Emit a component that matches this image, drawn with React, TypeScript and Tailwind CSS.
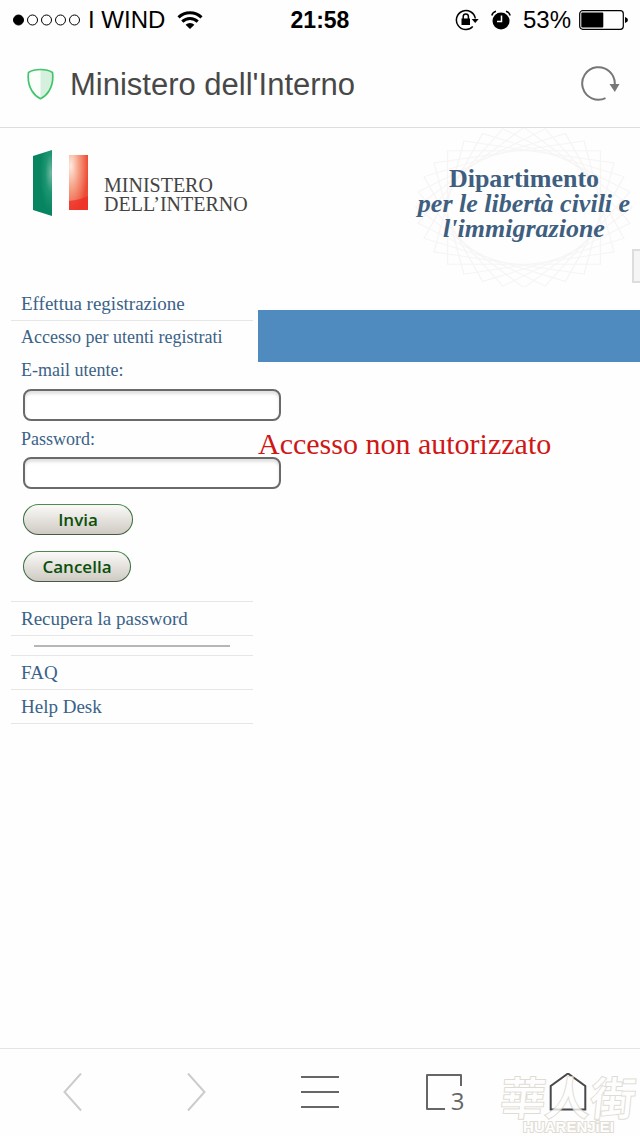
import React from "react";

const sans = "font-['Liberation_Sans',Arial,sans-serif]";
const menuLink = "block border-b border-[#e6e6e6] px-[10px] text-[19px] leading-[33px]";

function StatusBar() {
  return (
    <div className="grid h-10 grid-cols-[1fr_auto_1fr] items-center px-3 text-[24px] text-black">
      <div className="flex items-center gap-2">
        <svg className="h-[14px] w-[68px]" viewBox="0 0 68 14" fill="none" stroke="#000">
          <circle cx="6.500" cy="7" r="5" fill="#000" />
          <circle cx="20.500" cy="7" r="5" />
          <circle cx="34.500" cy="7" r="5" />
          <circle cx="48.500" cy="7" r="5" />
          <circle cx="62.500" cy="7" r="5" />
        </svg>
        <span>I WIND</span>
        <svg className="ml-1 h-[18px] w-[26px]" viewBox="0 0 26 18" fill="none" stroke="#000" strokeWidth="3">
          <path d="M1.500 6.300a16.500 16.500 0 0 1 23 0" />
          <path d="M5.300 10.600a11 11 0 0 1 15.400 0" />
          <path d="M8.600 13.800a6.300 6.300 0 0 1 8.800 0L13 18z" fill="#000" stroke="none" />
        </svg>
      </div>
      <span className="text-[23px] font-bold">21:58</span>
      <div className="flex items-center justify-end">
        <svg className="mr-3 h-6 w-6" viewBox="0 0 24 24" fill="none" stroke="#000">
          <path d="M17.800 18.600A9.500 9.500 0 1 1 20.300 10.500" strokeWidth="1.500" />
          <path d="M16.700 11h7L20.200 15z" fill="#000" stroke="none" />
          <rect x="6.500" y="10.500" width="8.500" height="6.500" fill="#000" stroke="none" />
          <path d="M8.200 11V8.500a2.600 2.600 0 0 1 5.200 0V11" strokeWidth="1.500" />
        </svg>
        <svg className="mr-3 h-5 w-5" viewBox="0 0 20 20" fill="none">
          <circle cx="10" cy="11" r="8.500" fill="#000" />
          <path d="M10.500 5.500v6H6" stroke="#fff" strokeWidth="1.500" />
          <path d="M.8 5.500A6 6 0 0 1 5 1.200M15 1.200a6 6 0 0 1 4.200 4.300" stroke="#000" strokeWidth="1.500" />
        </svg>
        <span className="mr-2">53%</span>
        <svg className="h-[20px] w-[49px]" viewBox="0 0 49 20">
          <rect x=".7" y=".7" width="43.600" height="18.600" rx="3" fill="none" stroke="#000" strokeWidth="1.200" />
          <rect x="2.300" y="2.500" width="22" height="15" rx="1" fill="#000" />
          <path d="M46 7q3 1 3 3t-3 3z" fill="#000" />
        </svg>
      </div>
    </div>
  );
}

function AddressBar() {
  return (
    <header className="flex h-[88px] items-center border-b border-[#dedede] pr-5 pl-[27px]">
      <svg className="mr-4 h-8 w-[27px]" viewBox="0 0 27 32">
        <path d="M13.500 1.500C9 1.500 4.500 2.500 1.500 4.500 .5 12 2 18 5 23c2 3.300 5 6 8.500 7.700z" fill="#fafffb" />
        <path d="M13.500 1.500c4.500 0 9 1 12 3C26.500 12 25 18 22 23c-2 3.300-5 6-8.500 7.700z" fill="#d5f0dd" />
        <path d="M13.500 1.500C9 1.500 4.500 2.500 1.500 4.500 .5 12 2 18 5 23c2 3.300 5 6 8.500 7.700 3.500-1.700 6.500-4.400 8.500-7.700 3-5 4.500-11 3.500-18.500-3-2-7.500-3-12-3z" fill="none" stroke="#40c56a" strokeWidth="1.700" strokeLinejoin="round" />
      </svg>
      <h1 className="flex-1 pt-[2px] text-[31px] leading-9 text-[#484848]">Ministero dell'Interno</h1>
      <button type="button" aria-label="Ricarica">
        <svg className="h-9 w-10" viewBox="0 0 40 36" fill="none">
          <path d="M25.500 32.200A16.300 16.300 0 1 1 34.800 18" stroke="#777" strokeWidth="2" />
          <path d="M29.500 18h10L34.800 26z" fill="#777" />
        </svg>
      </button>
    </header>
  );
}

function Rosette() {
  return (
    <svg className="absolute inset-0 h-full w-full" viewBox="-116 -80 232 160" fill="none" stroke="#f7f4f4">
      {Array.from({ length: 8 }, (_, i) => (
        <path key={i} d="M-57-57H57V57H-57z" transform={"scale(1.35 1) rotate(" + i * 11.25 + ")"} />
      ))}
    </svg>
  );
}

function Banner() {
  return (
    <div className="flex items-start justify-between pl-8">
      <div className="flex items-end pt-[21px]">
        <svg className="h-[68px] w-[57px]" viewBox="0 0 57 68">
          <defs>
            <radialGradient id="green" cx=".95" cy=".35" r=".6">
              <stop offset="0" stopColor="#6fb9a0" />
              <stop offset=".5" stopColor="#1d9572" />
              <stop offset="1" stopColor="#078460" />
            </radialGradient>
            <radialGradient id="red" cx=".1" cy=".2" r=".9">
              <stop offset="0" stopColor="#ffe9df" />
              <stop offset=".45" stopColor="#f5a286" />
              <stop offset="1" stopColor="#ed4b36" />
            </radialGradient>
          </defs>
          <path d="M1 7 20 1v66L1 61z" fill="url(#green)" />
          <path d="M37 6h19v55H37z" fill="url(#red)" />
          <path d="M37 52q11-1 19-5v14H37z" fill="#ee2b24" opacity=".7" />
        </svg>
        <div className="pb-[3px] pl-[15px] font-['Liberation_Serif','Times_New_Roman',serif] text-[20px] leading-[19px] text-[#444]">
          <div>MINISTERO</div>
          <div>DELL’INTERNO</div>
        </div>
      </div>
      <div className="relative flex h-[159px] w-[232px] flex-col pt-[38px] text-center text-[26px] leading-[25px] font-bold text-[#3e5f80]">
        <Rosette />
        <div className="relative">
          Dipartimento
          <div className="italic">
            per le libertà civili e
            <br />
            l'immigrazione
          </div>
        </div>
      </div>
    </div>
  );
}

function LoginForm() {
  const field =
    "mx-3 block h-8 w-[258px] rounded-[8px] border-2 border-[#6a6a6a] bg-white px-2 shadow-[inset_0_3px_3px_#e2e2e2]";
  const button =
    "ml-3 block h-[31px] rounded-full border border-t-[#4d8a4d] border-x-[#376b37] border-b-[#455b45] bg-linear-to-b from-[#fbfaf9] to-[#cfcac3] font-['Open_Sans',sans-serif] text-[17px] leading-[28px] font-semibold text-[#0a500a]";
  return (
    <form className="border-b border-[#e6e6e6] pb-[19px] text-[18px]" onSubmit={(e) => e.preventDefault()}>
      <p className="px-[10px] leading-[33px]">Accesso per utenti registrati</p>
      <label htmlFor="email" className="block px-[10px] pb-[3px] leading-[32px]">
        E-mail utente:
      </label>
      <input id="email" type="text" className={field} />
      <label htmlFor="password" className="block px-[10px] leading-[36px]">
        Password:
      </label>
      <input id="password" type="password" className={field} />
      <div className="flex flex-col items-start gap-4 pt-[15px]">
        <button type="submit" className={button + " w-[110px]"}>
          Invia
        </button>
        <button type="reset" className={button + " w-[108px]"}>
          Cancella
        </button>
      </div>
    </form>
  );
}

function Watermark() {
  return (
    <div
      aria-hidden="true"
      className="pointer-events-none absolute right-1 bottom-0 flex flex-col items-center text-[#fefefe] opacity-80 [paint-order:stroke]"
    >
      <span className="-skew-x-6 font-['Noto_Sans_CJK_TC',sans-serif] text-[45px] leading-[46px] font-medium [-webkit-text-stroke:2px_#d9d4ca]">
        華人街
      </span>
      <span className="pb-[2px] font-['Liberation_Sans',sans-serif] text-[15px] leading-[15px] font-bold [-webkit-text-stroke:2px_#d9d4ca]">
        HUARENJiEI
      </span>
    </div>
  );
}

function Toolbar() {
  const cell = "flex items-center justify-center";
  return (
    <nav className="relative grid h-[88px] grid-cols-5 border-t border-[#e4e4e4] px-[11px]">
      <button type="button" aria-label="Indietro" className={cell}>
        <svg className="h-10 w-5" viewBox="0 0 20 40" fill="none" stroke="#ccc" strokeWidth="2">
          <path d="M18 .5 1.500 19 18 37.500" />
        </svg>
      </button>
      <button type="button" aria-label="Avanti" className={cell}>
        <svg className="h-10 w-5" viewBox="0 0 20 40" fill="none" stroke="#ccc" strokeWidth="2">
          <path d="M2 .5 18.500 19 2 37.500" />
        </svg>
      </button>
      <button type="button" aria-label="Menu" className={cell}>
        <svg className="h-10 w-10" viewBox="0 0 40 40" stroke="#666" strokeWidth="2">
          <path d="M1 4h38M1 19h38M1 34h38" />
        </svg>
      </button>
      <button type="button" aria-label="Schede aperte" className={cell}>
        <span className="relative">
          <svg className="h-10 w-10" viewBox="0 0 40 40" fill="none" stroke="#666" strokeWidth="2">
            <path d="M21 36H3V2h34v11" strokeLinejoin="round" />
          </svg>
          <span className="absolute right-[-1px] bottom-[-4px] font-['Open_Sans',sans-serif] text-[24px] leading-8 text-[#666]">
            3
          </span>
        </span>
      </button>
      <button type="button" aria-label="Pagina iniziale" className={cell}>
        <svg className="h-10 w-10" viewBox="0 0 40 40" fill="none" stroke="#48484c" strokeWidth="2">
          <path d="M21 .5 38.300 13v23.500H3.700V13z" />
        </svg>
      </button>
      <Watermark />
    </nav>
  );
}

export default function App() {
  return (
    <div className={"flex min-h-screen flex-col overflow-x-hidden bg-[#fefefe] " + sans}>
      <StatusBar />
      <AddressBar />
      <main className="flex-1 font-['Liberation_Serif','Times_New_Roman',serif] text-[#3a6288]">
        <div className="relative">
          <Banner />
          <div className="absolute right-0 bottom-1 h-[34px] w-2 border-2 border-r-0 border-[#ddd] bg-[#f5f5f5]" />
        </div>
        <div className="flex items-start">
          <aside className="box-content w-[242px] shrink-0 pl-[11px]">
            <a href="#registrazione" className={menuLink}>
              Effettua registrazione
            </a>
            <LoginForm />
            <a href="#recupera" className={menuLink}>
              Recupera la password
            </a>
            <div className="border-b border-[#e6e6e6] px-[23px] pt-[9px] pb-2">
              <hr className="border-t-2 border-[#b5b8b8]" />
            </div>
            <a href="#faq" className={menuLink}>
              FAQ
            </a>
            <a href="#help" className={menuLink}>
              Help Desk
            </a>
          </aside>
          <section className="ml-[5px] min-w-0 flex-1 pt-[23px]">
            <div className="h-[52px] bg-[#4f8bbf]" />
            <p className="relative pt-[66px] text-[30px] leading-8 text-[#cf1717]">Accesso non autorizzato</p>
          </section>
        </div>
      </main>
      <Toolbar />
    </div>
  );
}
